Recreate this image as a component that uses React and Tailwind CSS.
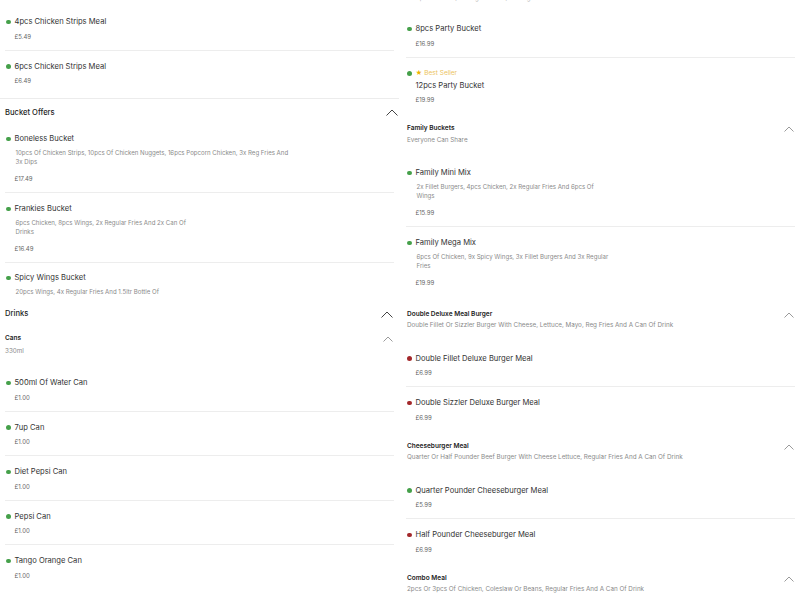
import React from "react";

const FONT = { fontFamily: "Inter, 'Noto Sans', sans-serif" };

function Dot({ red }) {
  return (
    <span
      className={
        red
          ? "inline-block w-[4.5px] h-[4.5px] rounded-full bg-[#a3282b] shrink-0"
          : "inline-block w-[4.5px] h-[4.5px] rounded-full bg-[#45a04a] shrink-0"
      }
    />
  );
}

function Chevron({ big }) {
  return big ? (
    <svg width="12" height="7" viewBox="0 0 12 7" className="shrink-0">
      <polyline points="0.5,6.5 6,1 11.5,6.5" fill="none" stroke="#444" strokeWidth="1" />
    </svg>
  ) : (
    <svg width="10" height="6" viewBox="0 0 10 6" className="shrink-0">
      <polyline points="0.5,5.5 5,1 9.5,5.5" fill="none" stroke="#9a9a9a" strokeWidth="1" />
    </svg>
  );
}

function Item({ name, price, desc, red, border = true, pt = "pt-[10px]", pb = "pb-[7.5px]", badge, clip }) {
  return (
    <div
      className={
        pt + " " + pb + " " + (border ? "border-b border-[#ededed] " : "") + (clip ? "h-[35px] overflow-hidden" : "")
      }
    >
      {badge ? (
        <>
          <div className="flex items-center h-[12px] pl-[1px]">
            <Dot />
            <span className="ml-[4px] text-[6.5px] text-[#f0b400] leading-none">★</span>
            <span className="ml-[2px] text-[6.5px] text-[#ecc35c]">Best Seller</span>
          </div>
          <div className="flex items-center h-[12px] pl-[9.5px] text-[7.6px] text-[#333]">{name}</div>
        </>
      ) : (
        <div className="flex items-center h-[12px] pl-[1px]">
          <Dot red={red} />
          <span className="ml-[4px] text-[7.6px] text-[#333]">{name}</span>
        </div>
      )}
      {desc && (
        <div className="mt-[3px] pl-[10.5px] text-[6.1px] leading-[9px] text-[#8a8a8a]">
          {desc.map((l, i) => (
            <div key={i} className="h-[9px] whitespace-nowrap">{l}</div>
          ))}
        </div>
      )}
      {price && (
        <div
          className={
            "flex items-center h-[12px] pl-[9.5px] text-[6px] text-[#666] " + (desc ? "mt-[6px]" : "mt-[2px]")
          }
        >
          {price}
        </div>
      )}
    </div>
  );
}

function LeftHeader({ title, border, h }) {
  return (
    <div className={"flex items-center justify-between pr-[1px] " + h + (border ? " border-t border-[#ececec] -mx-[5px] px-[5px]" : "")}>
      <span className="text-[7.6px] font-medium text-[#222]">{title}</span>
      <Chevron big />
    </div>
  );
}

function SubHeader({ title, desc, pt = "pt-[10px]", pb = "pb-[10.5px]" }) {
  return (
    <div className={pt + " " + pb}>
      <div className="flex items-center justify-between h-[11px] pl-[1px] pr-[1px]">
        <span className="text-[6.5px] font-semibold text-[#222]">{title}</span>
        <Chevron />
      </div>
      <div className="flex items-center h-[12px] pl-[1px] text-[6.3px] text-[#8a8a8a] whitespace-nowrap">{desc}</div>
    </div>
  );
}

export default function App() {
  return (
    <div className="w-[800px] h-[600px] overflow-hidden bg-white" style={FONT}>
      <div className="grid grid-cols-2 gap-[12px] px-[5px]">
        {/* Left column */}
        <div className="flex flex-col pt-[6px]">
          <Item name="4pcs Chicken Strips Meal" price="£5.49" />
          <Item name="6pcs Chicken Strips Meal" price="£6.49" border={false} pb="pb-[11.5px]" />
          <LeftHeader title="Bucket Offers" border h="h-[28px]" />
          <Item
            name="Boneless Bucket"
            pt="pt-[7px]"
            pb="pb-[8px]"
            desc={[
              "10pcs Of Chicken Strips, 10pcs Of Chicken Nuggets, 16pcs Popcorn Chicken, 3x Reg Fries And",
              "3x Dips",
            ]}
            price="£17.49"
          />
          <Item
            name="Frankies Bucket"
            pb="pb-[8px]"
            desc={["6pcs Chicken, 8pcs Wings, 2x Regular Fries And 2x Can Of", "Drinks"]}
            price="£16.49"
          />
          <Item
            name="Spicy Wings Bucket"
            pt="pt-[9px]"
            pb="pb-0"
            border={false}
            clip
            desc={["20pcs Wings, 4x Regular Fries And 1.5ltr Bottle Of"]}
          />
          <LeftHeader title="Drinks" h="h-[32px]" />
          <div className="pt-[3px] pb-[9px]">
            <div className="flex items-center justify-between h-[12px] pr-[1px]">
              <span className="text-[6.5px] font-semibold text-[#222]">Cans</span>
              <Chevron />
            </div>
            <div className="flex items-center h-[12px] mt-[1px] text-[6.3px] text-[#8a8a8a]">330ml</div>
          </div>
          <Item name="500ml Of Water Can" price="£1.00" />
          <Item name="7up Can" price="£1.00" />
          <Item name="Diet Pepsi Can" price="£1.00" />
          <Item name="Pepsi Can" price="£1.00" />
          <Item name="Tango Orange Can" price="£1.00" border={false} />
        </div>

        {/* Right column */}
        <div className="flex flex-col">
          <div className="h-[13px] overflow-hidden">
            <div className="-mt-[7px] pl-[10px] text-[6.1px] leading-[9px] text-[#b0b0b0] whitespace-nowrap">
              8pcs Chicken, 4x Regular Fries, 2x Large Coleslaw And 1.5ltr Bottle Of Drink
            </div>
          </div>
          <Item name="8pcs Party Bucket" price="£16.99" />
          <Item name="12pcs Party Bucket" price="£19.99" badge border={false} pb="pb-[8px]" />
          <SubHeader title="Family Buckets" desc="Everyone Can Share" />
          <Item
            name="Family Mini Mix"
            pb="pb-[8px]"
            desc={["2x Fillet Burgers, 4pcs Chicken, 2x Regular Fries And 6pcs Of", "Wings"]}
            price="£15.99"
          />
          <Item
            name="Family Mega Mix"
            border={false}
            pb="pb-[11px]"
            desc={["6pcs Of Chicken, 9x Spicy Wings, 3x Fillet Burgers And 3x Regular", "Fries"]}
            price="£19.99"
          />
          <SubHeader
            title="Double Deluxe Meal Burger"
            desc="Double Fillet Or Sizzler Burger With Cheese, Lettuce, Mayo, Reg Fries And A Can Of Drink"
          />
          <Item name="Double Fillet Deluxe Burger Meal" price="£6.99" red />
          <Item name="Double Sizzler Deluxe Burger Meal" price="£6.99" red border={false} pb="pb-[8px]" />
          <SubHeader
            title="Cheeseburger Meal"
            desc="Quarter Or Half Pounder Beef Burger With Cheese Lettuce, Regular Fries And A Can Of Drink"
          />
          <Item name="Quarter Pounder Cheeseburger Meal" price="£5.99" />
          <Item name="Half Pounder Cheeseburger Meal" price="£6.99" red border={false} pb="pb-[8px]" />
          <SubHeader
            title="Combo Meal"
            desc="2pcs Or 3pcs Of Chicken, Coleslaw Or Beans, Regular Fries And A Can Of Drink"
          />
        </div>
      </div>
    </div>
  );
}
